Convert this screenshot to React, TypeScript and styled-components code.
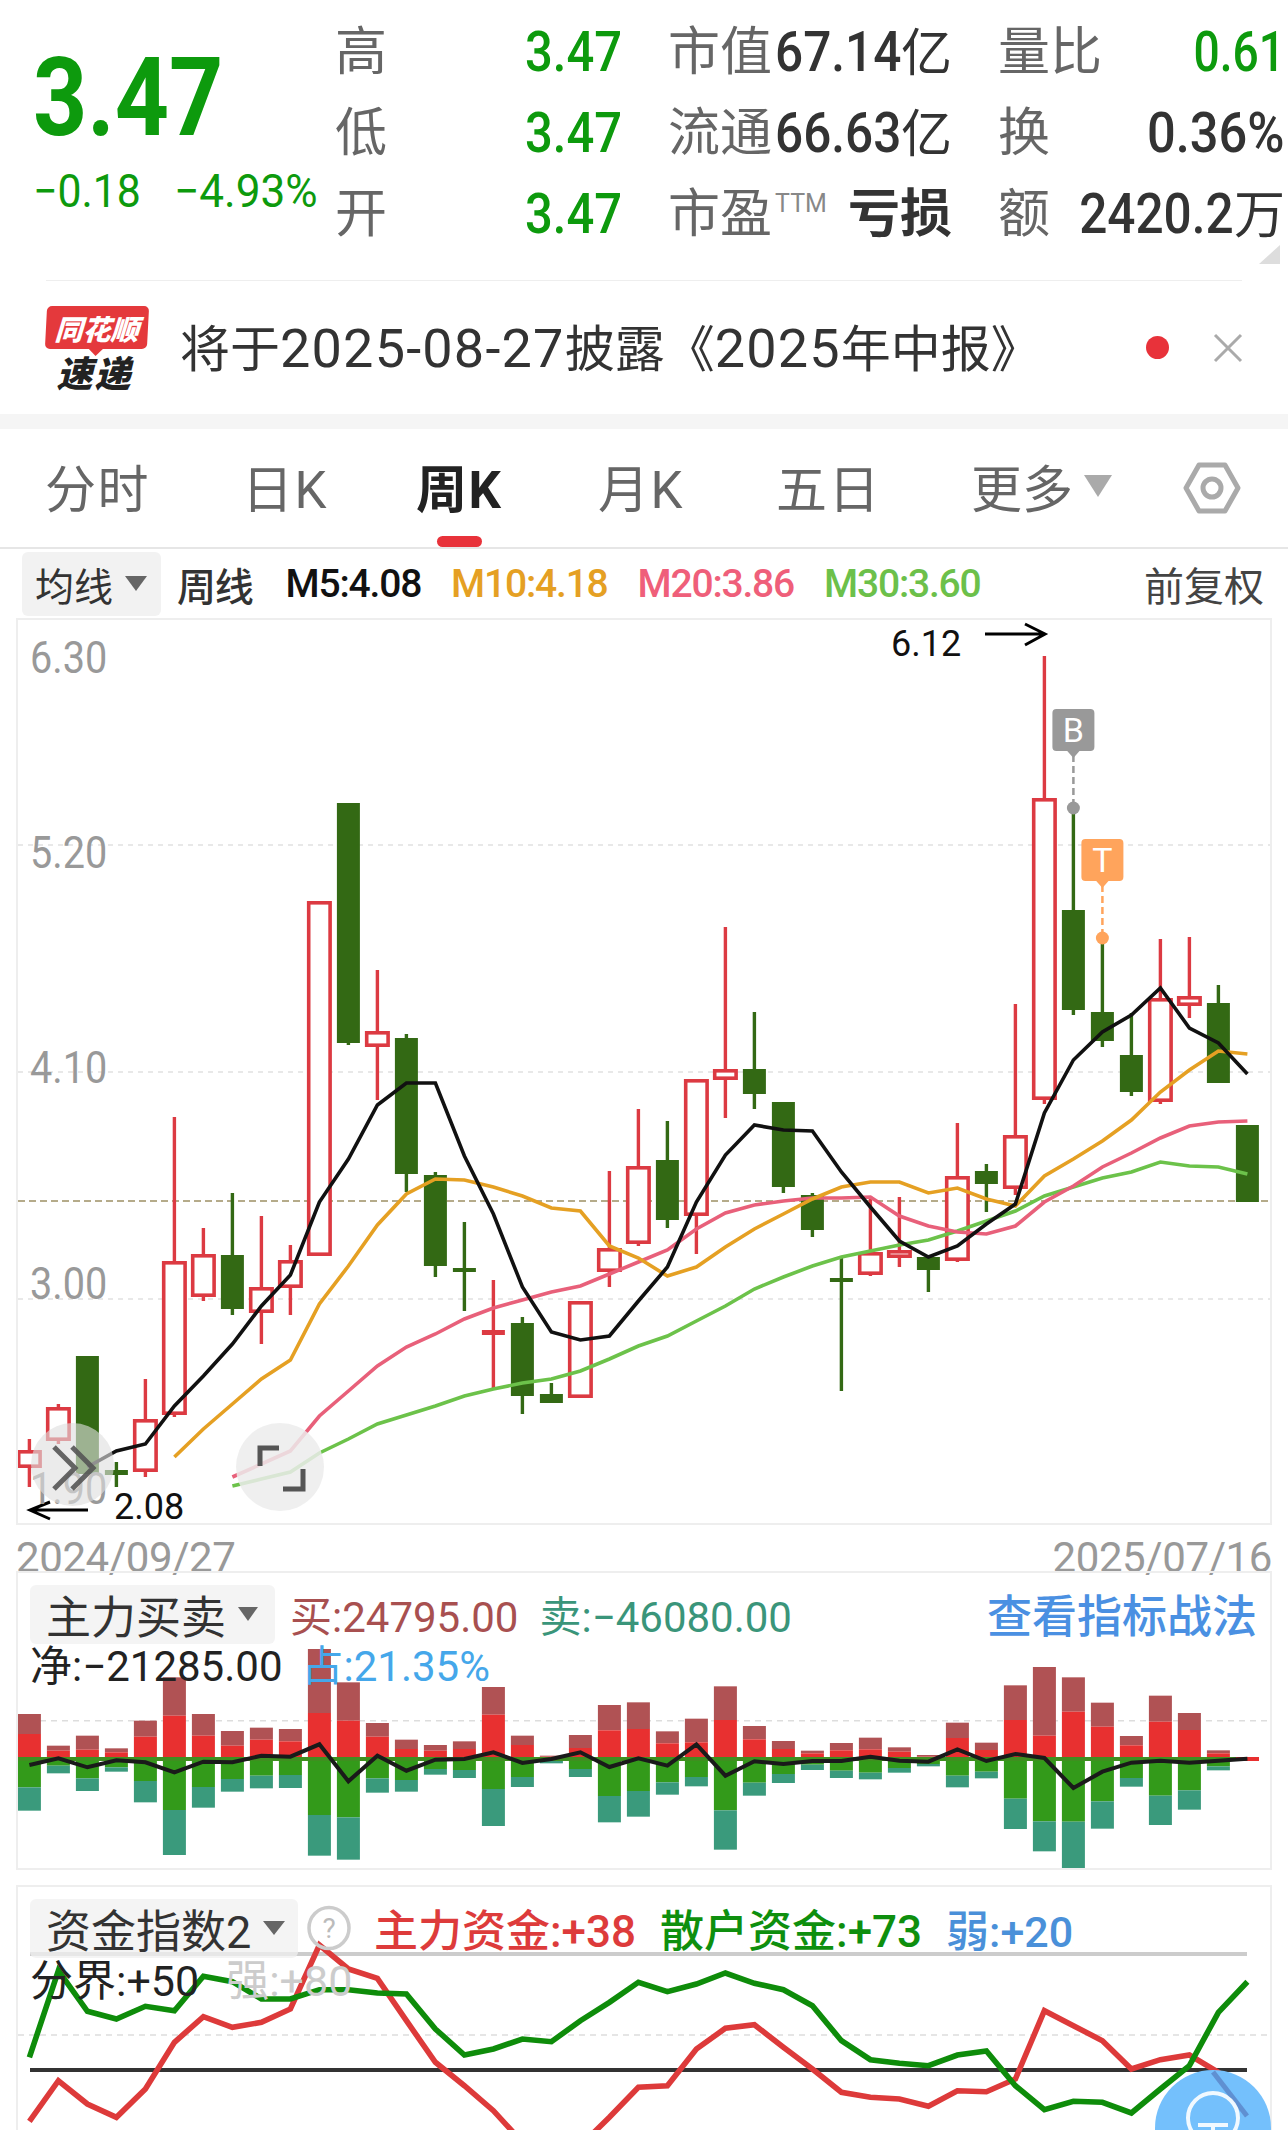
import styled, { createGlobalStyle } from "styled-components";

const FONT = `Roboto, "Noto Sans CJK SC", sans-serif`;

const GREEN = "#0d9a0d";
const CANDLE_RED = "#dc3a42";
const CANDLE_GREEN = "#336914";

const xAt = (i: number) => 29.4 + 29 * i;
const toPath = (ys: number[], start = 0) =>
    ys.map((y, i) => `${i === 0 ? "M" : "L"}${xAt(i + start).toFixed(1)} ${y.toFixed(1)}`).join(" ");

type Candle = [up: number, wickTop: number, wickBottom: number, bodyTop: number, bodyBottom: number];

const candles: Candle[] = [
    [1, 1440, 1488, 1451, 1469],
    [1, 1405, 1445, 1408, 1442],
    [0, 1357, 1475, 1357, 1475],
    [0, 1463, 1488, 1471, 1476],
    [1, 1380, 1478, 1420, 1473],
    [1, 1118, 1418, 1262, 1416],
    [1, 1229, 1302, 1255, 1298],
    [0, 1194, 1316, 1256, 1310],
    [1, 1217, 1345, 1288, 1314],
    [1, 1246, 1316, 1261, 1289],
    [1, 902, 1257, 902, 1257],
    [0, 804, 1046, 804, 1044],
    [1, 971, 1101, 1032, 1048],
    [0, 1035, 1193, 1039, 1175],
    [0, 1173, 1278, 1176, 1267],
    [0, 1223, 1312, 1269, 1273],
    [1, 1281, 1390, 1331, 1336],
    [0, 1318, 1415, 1324, 1397],
    [0, 1384, 1404, 1395, 1404],
    [1, 1302, 1399, 1302, 1399],
    [1, 1172, 1288, 1249, 1273],
    [1, 1110, 1247, 1167, 1245],
    [0, 1122, 1229, 1161, 1221],
    [1, 1080, 1255, 1080, 1217],
    [1, 928, 1119, 1070, 1081],
    [0, 1013, 1110, 1070, 1095],
    [0, 1103, 1194, 1103, 1188],
    [0, 1194, 1238, 1196, 1231],
    [0, 1258, 1392, 1279, 1283],
    [1, 1197, 1277, 1253, 1276],
    [1, 1198, 1268, 1251, 1259],
    [0, 1258, 1293, 1258, 1271],
    [1, 1124, 1263, 1177, 1262],
    [0, 1165, 1213, 1172, 1185],
    [1, 1005, 1196, 1136, 1190],
    [1, 657, 1105, 799, 1101],
    [0, 809, 1016, 911, 1011],
    [0, 940, 1048, 1013, 1042],
    [0, 1014, 1097, 1056, 1093],
    [1, 940, 1105, 999, 1103],
    [1, 938, 1019, 997, 1007],
    [0, 986, 1084, 1004, 1084],
    [0, 1126, 1203, 1126, 1203],
];

const ma5 = [
    1468, 1452, 1445, 1407, 1377, 1345, 1307, 1276, 1203, 1160, 1106, 1084, 1084, 1157, 1215, 1288, 1333, 1341, 1337,
    1302, 1268, 1203, 1156, 1126, 1131, 1132, 1173, 1208, 1242, 1258, 1247, 1225, 1205, 1114, 1061, 1033, 1016, 989,
    1029, 1044, 1075,
];
const ma10 = [
    1458, 1430, 1405, 1380, 1361, 1305, 1267, 1226, 1195, 1180, 1181, 1188, 1197, 1209, 1212, 1247, 1259, 1277, 1268,
    1248, 1230, 1215, 1200, 1188, 1183, 1183, 1194, 1189, 1200, 1207, 1177, 1160, 1142, 1121, 1093, 1071, 1052, 1055,
];
const ma20 = [
    1478, 1465, 1452, 1417, 1392, 1367, 1348, 1335, 1320, 1309, 1301, 1293, 1287, 1275, 1263, 1251, 1230, 1214, 1206,
    1202, 1199, 1199, 1198, 1217, 1227, 1233, 1235, 1227, 1203, 1187, 1168, 1154, 1139, 1127, 1123, 1122,
];
const ma30 = [
    1487, 1480, 1473, 1454, 1440, 1425, 1416, 1407, 1397, 1390, 1384, 1380, 1372, 1360, 1347, 1337, 1322, 1307, 1290,
    1278, 1267, 1258, 1252, 1246, 1241, 1232, 1222, 1212, 1197, 1188, 1179, 1173, 1163, 1167, 1168, 1175,
];

/* bar edges as read off the 3x crops: top, red start, green end, bottom */
const volumeBars = [
    [435, 495, 655, 725], [530, 545, 590, 613], [500, 542, 628, 666], [538, 550, 595, 608], [455, 503, 636, 700],
    [325, 440, 723, 858], [435, 500, 654, 716], [486, 530, 630, 668], [476, 512, 620, 658], [480, 517, 618, 657],
    [240, 432, 738, 860], [340, 455, 745, 872], [462, 503, 628, 671], [512, 540, 633, 668], [528, 545, 600, 617],
    [517, 540, 603, 627], [354, 437, 660, 771], [500, 528, 624, 654], [560, 563, 575, 583], [498, 537, 600, 624],
    [408, 484, 681, 760], [400, 480, 666, 743], [487, 523, 640, 677], [449, 520, 624, 652], [352, 453, 724, 842],
    [471, 511, 641, 680], [516, 540, 615, 642], [545, 553, 587, 603], [522, 544, 605, 627], [506, 541, 611, 631],
    [535, 548, 597, 611], [558, 563, 585, 592], [461, 507, 620, 655], [521, 543, 608, 628], [349, 453, 689, 780],
    [294, 500, 757, 847], [325, 428, 758, 903], [401, 473, 697, 779], [501, 529, 627, 653], [380, 458, 680, 768],
    [432, 483, 664, 722], [544, 553, 592, 604],
];
const netLine = [
    588, 568, 595, 574, 580, 610, 578, 580, 560, 563, 526, 637, 560, 605, 572, 570, 550, 582, 570, 550, 594, 568, 590,
    526, 620, 577, 585, 576, 576, 563, 575, 578, 541, 576, 555, 567, 657, 608, 581, 575, 581, 575, 569,
];
const panel2Y = (z: number) => 1570 + z / 3;

const retailLine = [
    565, 305, 427, 450, 412, 425, 322, 338, 390, 390, 362, 362, 372, 375, 480, 558, 540, 510, 518, 455, 400, 340, 368,
    345, 312, 343, 362, 410, 515, 572, 583, 590, 558, 546, 650, 722, 697, 700, 732, 660, 590, 430, 338,
];
const mainLine = [
    757, 635, 705, 745, 660, 520, 443, 475, 460, 420, 228, 300, 328, 455, 580, 650, 725, 820, 860, 830, 745, 655, 650,
    540, 478, 467, 535, 600, 670, 685, 690, 712, 665, 668, 630, 425, 470, 515, 600, 572, 558, 610, 735,
];
const panel3Y = (z: number) => 1870 + z / 3;

const axisLabels = [
    { text: "6.30", top: 637 },
    { text: "5.20", top: 832 },
    { text: "4.10", top: 1047 },
    { text: "3.00", top: 1263 },
    { text: "1.90", top: 1468 },
];

const stats = [
    { label: "高", num: "3.47", k: 0.89, tone: "green" },
    { label: "市值", num: "67.14", unit: "亿", k: 0.9, tone: "dark" },
    { label: "量比", num: "0.61", k: 0.84, tone: "green" },
    { label: "低", num: "3.47", k: 0.89, tone: "green" },
    { label: "流通", num: "66.63", unit: "亿", k: 0.9, tone: "dark" },
    { label: "换", num: "0.36%", k: 0.92, tone: "dark" },
    { label: "开", num: "3.47", k: 0.89, tone: "green" },
    { label: "市盈", sup: "TTM", strong: "亏损", tone: "dark" },
    { label: "额", num: "2420.2", unit: "万", k: 0.9, tone: "dark" },
];

const tabs = [
    { text: "分时", width: 103 },
    { text: "日K", width: 80 },
    { text: "周K", width: 88, active: true },
    { text: "月K", width: 84 },
    { text: "五日", width: 101 },
];

const GlobalStyle = createGlobalStyle`
    html, body {
        margin: 0;
        padding: 0;
        background: #fff;
    }
    * {
        box-sizing: border-box;
    }
`;

const Page = styled.div`
    position: relative;
    width: 1288px;
    height: 2130px;
    overflow: hidden;
    background: #fff;
    font-family: ${FONT};
`;

/* the reference uses a condensed DIN face, Roboto squeezed sideways is the closest we have */
const Condensed = styled.span<{ $k: number; $origin?: string }>`
    display: inline-block;
    transform: scaleX(${(p) => p.$k});
    transform-origin: ${(p) => p.$origin ?? "left"} center;
`;

const Header = styled.div`
    position: relative;
    display: flex;
    height: 280px;
    padding-top: 8px;
`;

const PriceBlock = styled.div`
    width: 337px;
    padding-left: 33px;
    color: ${GREEN};
`;

const BigPrice = styled.div`
    height: 132px;
    padding-top: 33px;
    font-size: 110px;
    line-height: 113px;
    font-weight: 700;
`;

const Change = styled.div`
    display: flex;
    gap: 25px;
    margin-top: 21px;
    font-size: 46px;
    line-height: 60px;
    white-space: nowrap;
`;

const StatGrid = styled.div`
    display: grid;
    grid-template-columns: 285px 282px 285px;
    grid-auto-rows: 81px;
    column-gap: 48px;
    margin-top: 4px;
`;

const Stat = styled.div`
    display: flex;
    align-items: center;
    justify-content: space-between;
`;

const StatLabel = styled.span`
    flex: none;
    margin: 0 -40px 0 -2px;
    font-size: 52px;
    line-height: 81px;
    color: #666;
    white-space: nowrap;
`;

const Sup = styled.sup`
    display: inline-block;
    margin-left: 3px;
    font-size: 25px;
    line-height: 22px;
    color: #888;
    vertical-align: 20px;
`;

const StatValue = styled.span<{ $tone: string }>`
    display: flex;
    flex: none;
    align-items: baseline;
    font-size: 55px;
    line-height: 81px;
    font-weight: 500;
    white-space: nowrap;
    color: ${(p) => (p.$tone === "green" ? GREEN : "#333")};
`;

const StatUnit = styled.span`
    font-size: 51px;
    font-weight: 400;
`;

const StrongValue = styled.span`
    font-size: 52px;
    line-height: 81px;
    font-weight: 700;
    color: #333;
`;

const Corner = styled.div`
    position: absolute;
    right: 8px;
    top: 245px;
    width: 0;
    height: 0;
    border-left: 21px solid transparent;
    border-bottom: 19px solid #ddd;
`;

const Divider = styled.div`
    height: 1px;
    margin: 0 46px;
    background: #eee;
`;

const Notice = styled.div`
    display: flex;
    align-items: center;
    height: 133px;
    padding-left: 46px;
`;

const Logo = styled.div`
    display: flex;
    flex-direction: column;
    align-items: center;
    width: 102px;
    margin-top: 2px;
`;

const LogoBubble = styled.div`
    position: relative;
    display: flex;
    align-items: center;
    justify-content: center;
    width: 102px;
    height: 43px;
    border-radius: 5px;
    background: #e4393c;
    transform: skewX(-3deg);
    color: #fff;
    font-family: "Noto Sans CJK SC", sans-serif;
    font-size: 28px;
    font-weight: 900;
    font-style: italic;
    &::after {
        content: "";
        position: absolute;
        left: 43px;
        top: 42px;
        border-left: 8px solid transparent;
        border-right: 8px solid transparent;
        border-top: 8px solid #e4393c;
    }
`;

const LogoSub = styled.div`
    margin: 2px 5px 0 0;
    color: #222;
    font-family: "Noto Sans CJK SC", sans-serif;
    font-size: 36px;
    line-height: 40px;
    font-weight: 900;
    font-style: italic;
    letter-spacing: 2px;
`;

const NoticeText = styled.div`
    flex: 1;
    margin: 0 0 5px 32px;
    font-size: 50px;
    color: #333;
    white-space: nowrap;
`;

const NoticeNum = styled.span`
    font-size: 54px;
    letter-spacing: 1.2px;
`;

const RedDot = styled.span`
    width: 23px;
    height: 23px;
    border-radius: 50%;
    background: #e8323a;
`;

const CloseIcon = styled.svg`
    width: 30px;
    height: 30px;
    margin: 0 45px 0 44px;
`;

const Band = styled.div`
    height: 15px;
    background: #f5f5f5;
`;

const TabBar = styled.div`
    display: flex;
    align-items: center;
    height: 120px;
    padding-left: 45px;
    border-bottom: 2px solid #e6e6e6;
`;

const Tab = styled.div<{ $active?: boolean; $width: number }>`
    position: relative;
    display: flex;
    align-items: center;
    width: ${(p) => p.$width}px;
    height: 100%;
    margin-right: 94px;
    padding-bottom: 5px;
    font-size: 51px;
    letter-spacing: 1.5px;
    white-space: nowrap;
    color: ${(p) => (p.$active ? "#222" : "#666")};
    font-weight: ${(p) => (p.$active ? 700 : 400)};
    &::after {
        content: "";
        display: ${(p) => (p.$active ? "block" : "none")};
        position: absolute;
        left: 21px;
        bottom: 0;
        width: 45px;
        height: 11px;
        border-radius: 6px;
        background: #e8323a;
    }
`;

const MoreTab = styled.div`
    display: flex;
    align-items: center;
    gap: 11px;
    width: 212px;
    padding-bottom: 5px;
    font-size: 51px;
    color: #666;
    white-space: nowrap;
`;

const Caret = styled.span<{ $w: number; $h: number; $color: string }>`
    display: inline-block;
    width: 0;
    height: 0;
    border-left: ${(p) => p.$w / 2}px solid transparent;
    border-right: ${(p) => p.$w / 2}px solid transparent;
    border-top: ${(p) => p.$h}px solid ${(p) => p.$color};
`;

const LegendRow = styled.div`
    display: flex;
    align-items: center;
    height: 69px;
    padding: 0 24px 0 22px;
    font-size: 39px;
`;

const Dropdown = styled.div`
    display: flex;
    align-items: center;
    gap: 12px;
    width: 139px;
    height: 64px;
    padding-left: 13px;
    border-radius: 6px;
    background: #f2f2f2;
    color: #333;
`;

const LegendItem = styled.span<{ $color: string; $left: number }>`
    margin-left: ${(p) => p.$left}px;
    color: ${(p) => p.$color};
    font-size: 39px;
    font-weight: 500;
    letter-spacing: -1.2px;
    white-space: nowrap;
`;

const LegendEnd = styled.span`
    margin-left: auto;
    color: #444;
    font-size: 40px;
`;

const ChartBox = styled.div<{ $height: number }>`
    position: relative;
    width: 1256px;
    height: ${(p) => p.$height}px;
    margin-left: 16px;
    border: 2px solid #eee;
`;

const ChartSvg = styled.svg`
    position: absolute;
    left: 0;
    top: 0;
    width: 1252px;
`;

const AxisLabel = styled.span<{ $top: number }>`
    position: absolute;
    left: 12px;
    top: ${(p) => p.$top - 621}px;
    font-size: 44px;
    line-height: 44px;
    color: #999;
    transform: scaleX(0.9);
    transform-origin: left center;
`;

const PriceMark = styled.span<{ $left: number; $top: number }>`
    position: absolute;
    left: ${(p) => p.$left - 18}px;
    top: ${(p) => p.$top - 621}px;
    font-size: 36px;
    line-height: 36px;
    color: #111;
`;

const RoundTool = styled.div<{ $left: number; $top: number; $size: number; $fill: string }>`
    position: absolute;
    left: ${(p) => p.$left - 18}px;
    top: ${(p) => p.$top - 621}px;
    width: ${(p) => p.$size}px;
    height: ${(p) => p.$size}px;
    border-radius: 50%;
    background: ${(p) => p.$fill};
    & svg {
        display: block;
        width: 100%;
        height: 100%;
    }
`;

const DateRow = styled.div`
    display: flex;
    justify-content: space-between;
    height: 46px;
    padding: 12px 16px 0 16px;
    font-size: 42px;
    line-height: 41px;
    color: #999;
    letter-spacing: -0.4px;
`;

const IndicatorLegend = styled.div`
    position: relative;
    padding: 11px 0 0 12px;
`;

const IndicatorRow = styled.div<{ $height: number }>`
    display: flex;
    align-items: center;
    height: ${(p) => p.$height}px;
    white-space: nowrap;
`;

const IndicatorName = styled.div<{ $width: number }>`
    display: flex;
    align-items: center;
    gap: 12px;
    width: ${(p) => p.$width}px;
    height: 100%;
    margin-top: 1px;
    padding-left: 16px;
    border-radius: 6px;
    background: rgba(240, 240, 240, 0.75);
    color: #333;
    font-size: 45px;
`;

const Reading = styled.span<{ $color: string; $left?: number; $size?: number; $strong?: boolean }>`
    margin-left: ${(p) => p.$left ?? 0}px;
    color: ${(p) => p.$color};
    font-size: ${(p) => p.$size ?? 42}px;
    font-weight: ${(p) => (p.$strong ? 500 : 400)};
`;

const StrategyLink = styled.span`
    margin-left: auto;
    margin-right: 13px;
    color: #4a90e2;
    font-size: 45px;
    font-weight: 500;
`;

const PanelGap = styled.div`
    height: 15px;
`;

const HelpIcon = styled.svg`
    width: 44px;
    height: 46px;
    margin-left: 9px;
`;

const FloatButton = styled.div`
    position: absolute;
    left: 1155px;
    top: 2070px;
    width: 116px;
    height: 116px;
    border-radius: 50%;
    background: #74c0fc;
    overflow: hidden;
    & svg {
        display: block;
    }
`;

function Candles() {
    return (
        <>
            {candles.map(([up, wickTop, wickBottom, bodyTop, bodyBottom], i) => {
                const x = xAt(i);
                const color = up ? CANDLE_RED : CANDLE_GREEN;
                const thin = bodyBottom - bodyTop < 7;
                return (
                    <g key={i}>
                        <rect x={x - 1.7} y={wickTop} width={3.4} height={wickBottom - wickTop} fill={color} />
                        {up && !thin ? (
                            <rect
                                x={x - 10.7}
                                y={bodyTop + 1.8}
                                width={21.4}
                                height={bodyBottom - bodyTop - 3.6}
                                fill="#fff"
                                stroke={color}
                                strokeWidth={3.6}
                            />
                        ) : (
                            <rect x={x - 11.5} y={bodyTop} width={23} height={bodyBottom - bodyTop} fill={color} />
                        )}
                    </g>
                );
            })}
        </>
    );
}

function Marker({ x, dotY, top, color, letter }: { x: number; dotY: number; top: number; color: string; letter: string }) {
    return (
        <g>
            <line x1={x} y1={top + 46} x2={x} y2={dotY} stroke={color} strokeWidth={2.5} strokeDasharray="7 4" />
            <circle cx={x} cy={dotY} r={6.5} fill={color} />
            <rect x={x - 21} y={top} width={42} height={42} rx={4} fill={color} />
            <path d={`M${x - 7} ${top + 41} L${x} ${top + 49} L${x + 7} ${top + 41} Z`} fill={color} />
            <text x={x} y={top + 33} fontFamily="Roboto, sans-serif" fontSize={34} fill="#fff" textAnchor="middle">
                {letter}
            </text>
        </g>
    );
}

function PriceChart() {
    return (
        <ChartBox $height={907}>
            <ChartSvg viewBox="18 621 1252 903" height={903}>
                {[846, 1073, 1300].map((y) => (
                    <line key={y} x1={18} x2={1270} y1={y} y2={y} stroke="#e8e8e8" strokeWidth={2} strokeDasharray="5 5" />
                ))}
                <line x1={18} x2={1270} y1={1202} y2={1202} stroke="#b5ab8a" strokeWidth={2} strokeDasharray="7 4" />
                <Candles />
                <path d={toPath(ma30, 7)} fill="none" stroke="#6cc24a" strokeWidth={3.6} />
                <path d={toPath(ma20, 7)} fill="none" stroke="#e8607a" strokeWidth={3.6} />
                <path d={toPath(ma10, 5)} fill="none" stroke="#e5a023" strokeWidth={3.6} />
                <path d={toPath(ma5, 2)} fill="none" stroke="#111" strokeWidth={3.6} />
                <Marker x={1073.4} dotY={809} top={710} color="#999" letter="B" />
                <Marker x={1102.4} dotY={939} top={840} color="#ffa45c" letter="T" />
                <path d="M985 635 H1044 M1025 625 L1045 635 L1025 646" fill="none" stroke="#000" strokeWidth={3} />
                <path d="M88 1511 H30 M50 1503 L30 1511 L50 1520" fill="none" stroke="#000" strokeWidth={3} />
            </ChartSvg>
            {axisLabels.map((a) => (
                <AxisLabel key={a.text} $top={a.top}>
                    {a.text}
                </AxisLabel>
            ))}
            <PriceMark $left={891} $top={627}>
                6.12
            </PriceMark>
            <PriceMark $left={114} $top={1490}>
                2.08
            </PriceMark>
            <RoundTool $left={31} $top={1424} $size={83} $fill="rgba(222, 222, 222, 0.62)">
                <svg viewBox="0 0 83 83">
                    <path
                        d="M23 24 L44 45 L23 66 M41 24 L62 45 L41 66"
                        fill="none"
                        stroke="#555"
                        strokeWidth={5}
                        opacity={0.9}
                    />
                </svg>
            </RoundTool>
            <RoundTool $left={236} $top={1424} $size={88} $fill="rgba(236, 236, 236, 0.85)">
                <svg viewBox="0 0 88 88">
                    <path d="M43 25 H24 V43 M67 46 V66 H47" fill="none" stroke="#555" strokeWidth={5} />
                </svg>
            </RoundTool>
        </ChartBox>
    );
}

function VolumePanel() {
    return (
        <ChartBox $height={299}>
            <ChartSvg viewBox="18 1574 1252 295" height={295}>
                <line x1={18} x2={1270} y1={1721.7} y2={1721.7} stroke="#ddd" strokeWidth={1.5} strokeDasharray="6 5" />
                {volumeBars.map(([top, redTop, greenEnd, bottom], i) => {
                    const x = xAt(i) - 11.5;
                    return (
                        <g key={i}>
                            <rect x={x} y={panel2Y(top)} width={23} height={(redTop - top) / 3} fill="#b05254" />
                            <rect x={x} y={panel2Y(redTop)} width={23} height={(565 - redTop) / 3} fill="#e83030" />
                            <rect x={x} y={panel2Y(575)} width={23} height={(greenEnd - 575) / 3} fill="#339a1a" />
                            <rect x={x} y={panel2Y(greenEnd)} width={23} height={(bottom - greenEnd) / 3} fill="#3a9a7c" />
                        </g>
                    );
                })}
                <rect x={18} y={1758} width={1218} height={4} fill="#3f8f20" />
                <rect x={1236} y={1758} width={23} height={4} fill="#e83030" />
                <path d={toPath(netLine.map(panel2Y))} fill="none" stroke="#1a1a1a" strokeWidth={4} />
            </ChartSvg>
            <IndicatorLegend>
                <IndicatorRow $height={59}>
                    <IndicatorName $width={245}>
                        主力买卖
                        <Caret $w={21} $h={14} $color="#666" />
                    </IndicatorName>
                    <Reading $color="#a85050" $left={15}>
                        买:24795.00
                    </Reading>
                    <Reading $color="#3a957a" $left={21}>
                        卖:−46080.00
                    </Reading>
                    <StrategyLink>查看指标战法</StrategyLink>
                </IndicatorRow>
                <IndicatorRow $height={39}>
                    <Reading $color="#222" $left={0}>
                        净:−21285.00
                    </Reading>
                    <Reading $color="#45a7ea" $left={19}>
                        占:21.35%
                    </Reading>
                </IndicatorRow>
            </IndicatorLegend>
        </ChartBox>
    );
}

function FundPanel() {
    return (
        <ChartBox $height={260}>
            <ChartSvg viewBox="18 1888 1252 244" height={244}>
                <line x1={30} x2={1247} y1={1955} y2={1955} stroke="#ccc" strokeWidth={4} />
                <line x1={18} x2={1270} y1={2036} y2={2036} stroke="#ddd" strokeWidth={1.5} strokeDasharray="6 5" />
                <line x1={30} x2={1247} y1={2071} y2={2071} stroke="#333" strokeWidth={4} />
                <path d={toPath(mainLine.map(panel3Y))} fill="none" stroke="#dd3a3a" strokeWidth={5.6} />
                <path d={toPath(retailLine.map(panel3Y))} fill="none" stroke="#0e8c0a" strokeWidth={5.6} />
            </ChartSvg>
            <IndicatorLegend>
                <IndicatorRow $height={59}>
                    <IndicatorName $width={268}>
                        资金指数2
                        <Caret $w={22} $h={14} $color="#666" />
                    </IndicatorName>
                    <HelpIcon viewBox="0 0 44 46">
                        <ellipse cx={22} cy={23} rx={20} ry={20.5} fill="none" stroke="#ccc" strokeWidth={3.5} />
                        <text x={22} y={33} fontFamily="Roboto, sans-serif" fontSize={28} fill="#bbb" textAnchor="middle">
                            ?
                        </text>
                    </HelpIcon>
                    <Reading $color="#dd3b3b" $left={23} $size={44} $strong>
                        主力资金:+38
                    </Reading>
                    <Reading $color="#0e8f0e" $left={24} $size={44} $strong>
                        散户资金:+73
                    </Reading>
                    <Reading $color="#4a90d9" $left={24} $size={43} $strong>
                        弱:+20
                    </Reading>
                </IndicatorRow>
                <IndicatorRow $height={40}>
                    <Reading $color="#222" $left={0} $size={43}>
                        分界:+50
                    </Reading>
                    <Reading $color="#ccc" $left={27} $size={43}>
                        强:+80
                    </Reading>
                </IndicatorRow>
            </IndicatorLegend>
        </ChartBox>
    );
}

export default function App() {
    return (
        <Page>
            <GlobalStyle />
            <Header>
                <PriceBlock>
                    <BigPrice>
                        <Condensed $k={0.86}>3.47</Condensed>
                    </BigPrice>
                    <Change>
                        <Condensed $k={0.93}>−0.18</Condensed>
                        <Condensed $k={0.96}>−4.93%</Condensed>
                    </Change>
                </PriceBlock>
                <StatGrid>
                    {stats.map((s) => (
                        <Stat key={s.label}>
                            <StatLabel>
                                {s.label}
                                {s.sup && <Sup>{s.sup}</Sup>}
                            </StatLabel>
                            {s.strong ? (
                                <StrongValue>{s.strong}</StrongValue>
                            ) : (
                                <StatValue $tone={s.tone}>
                                    <Condensed $k={s.k ?? 1} $origin="right">
                                        {s.num}
                                    </Condensed>
                                    {s.unit && <StatUnit>{s.unit}</StatUnit>}
                                </StatValue>
                            )}
                        </Stat>
                    ))}
                </StatGrid>
                <Corner />
            </Header>
            <Divider />
            <Notice>
                <Logo>
                    <LogoBubble>同花顺</LogoBubble>
                    <LogoSub>速递</LogoSub>
                </Logo>
                <NoticeText>
                    将于<NoticeNum>2025-08-27</NoticeNum>披露《<NoticeNum>2025</NoticeNum>年中报》
                </NoticeText>
                <RedDot />
                <CloseIcon viewBox="0 0 30 30">
                    <path d="M2 2 L28 28 M28 2 L2 28" stroke="#aaa" strokeWidth={3} />
                </CloseIcon>
            </Notice>
            <Band />
            <TabBar>
                {tabs.map((t) => (
                    <Tab key={t.text} $width={t.width} $active={t.active}>
                        {t.text}
                    </Tab>
                ))}
                <MoreTab>
                    更多
                    <Caret $w={28} $h={22} $color="#aaa" />
                </MoreTab>
                <svg width="58" height="54" viewBox="0 0 58 54">
                    <path
                        d="M16 4 H42 L55 27 L42 50 H16 L3 27 Z"
                        fill="none"
                        stroke="#aaa"
                        strokeWidth={5}
                        strokeLinejoin="round"
                    />
                    <circle cx={29} cy={27} r={9} fill="none" stroke="#aaa" strokeWidth={5} />
                </svg>
            </TabBar>
            <LegendRow>
                <Dropdown>
                    均线
                    <Caret $w={22} $h={15} $color="#666" />
                </Dropdown>
                <LegendItem $color="#333" $left={16}>
                    周线
                </LegendItem>
                <LegendItem $color="#111" $left={33}>
                    M5:4.08
                </LegendItem>
                <LegendItem $color="#e5a023" $left={30}>
                    M10:4.18
                </LegendItem>
                <LegendItem $color="#ef5f7a" $left={30}>
                    M20:3.86
                </LegendItem>
                <LegendItem $color="#6cc04a" $left={30}>
                    M30:3.60
                </LegendItem>
                <LegendEnd>前复权</LegendEnd>
            </LegendRow>
            <PriceChart />
            <DateRow>
                <span>2024/09/27</span>
                <span>2025/07/16</span>
            </DateRow>
            <VolumePanel />
            <PanelGap />
            <FundPanel />
            <FloatButton>
                <svg width="116" height="116" viewBox="0 0 116 116">
                    <path d="M58 2 L92 46" stroke="#5f90d2" strokeWidth={5} fill="none" />
                    <circle cx={58} cy={48} r={25} fill="none" stroke="#fff" strokeOpacity={0.9} strokeWidth={4} />
                    <path d="M43 55 H73 M58 55 V72" stroke="#fff" strokeOpacity={0.9} strokeWidth={4} fill="none" />
                </svg>
            </FloatButton>
        </Page>
    );
}
